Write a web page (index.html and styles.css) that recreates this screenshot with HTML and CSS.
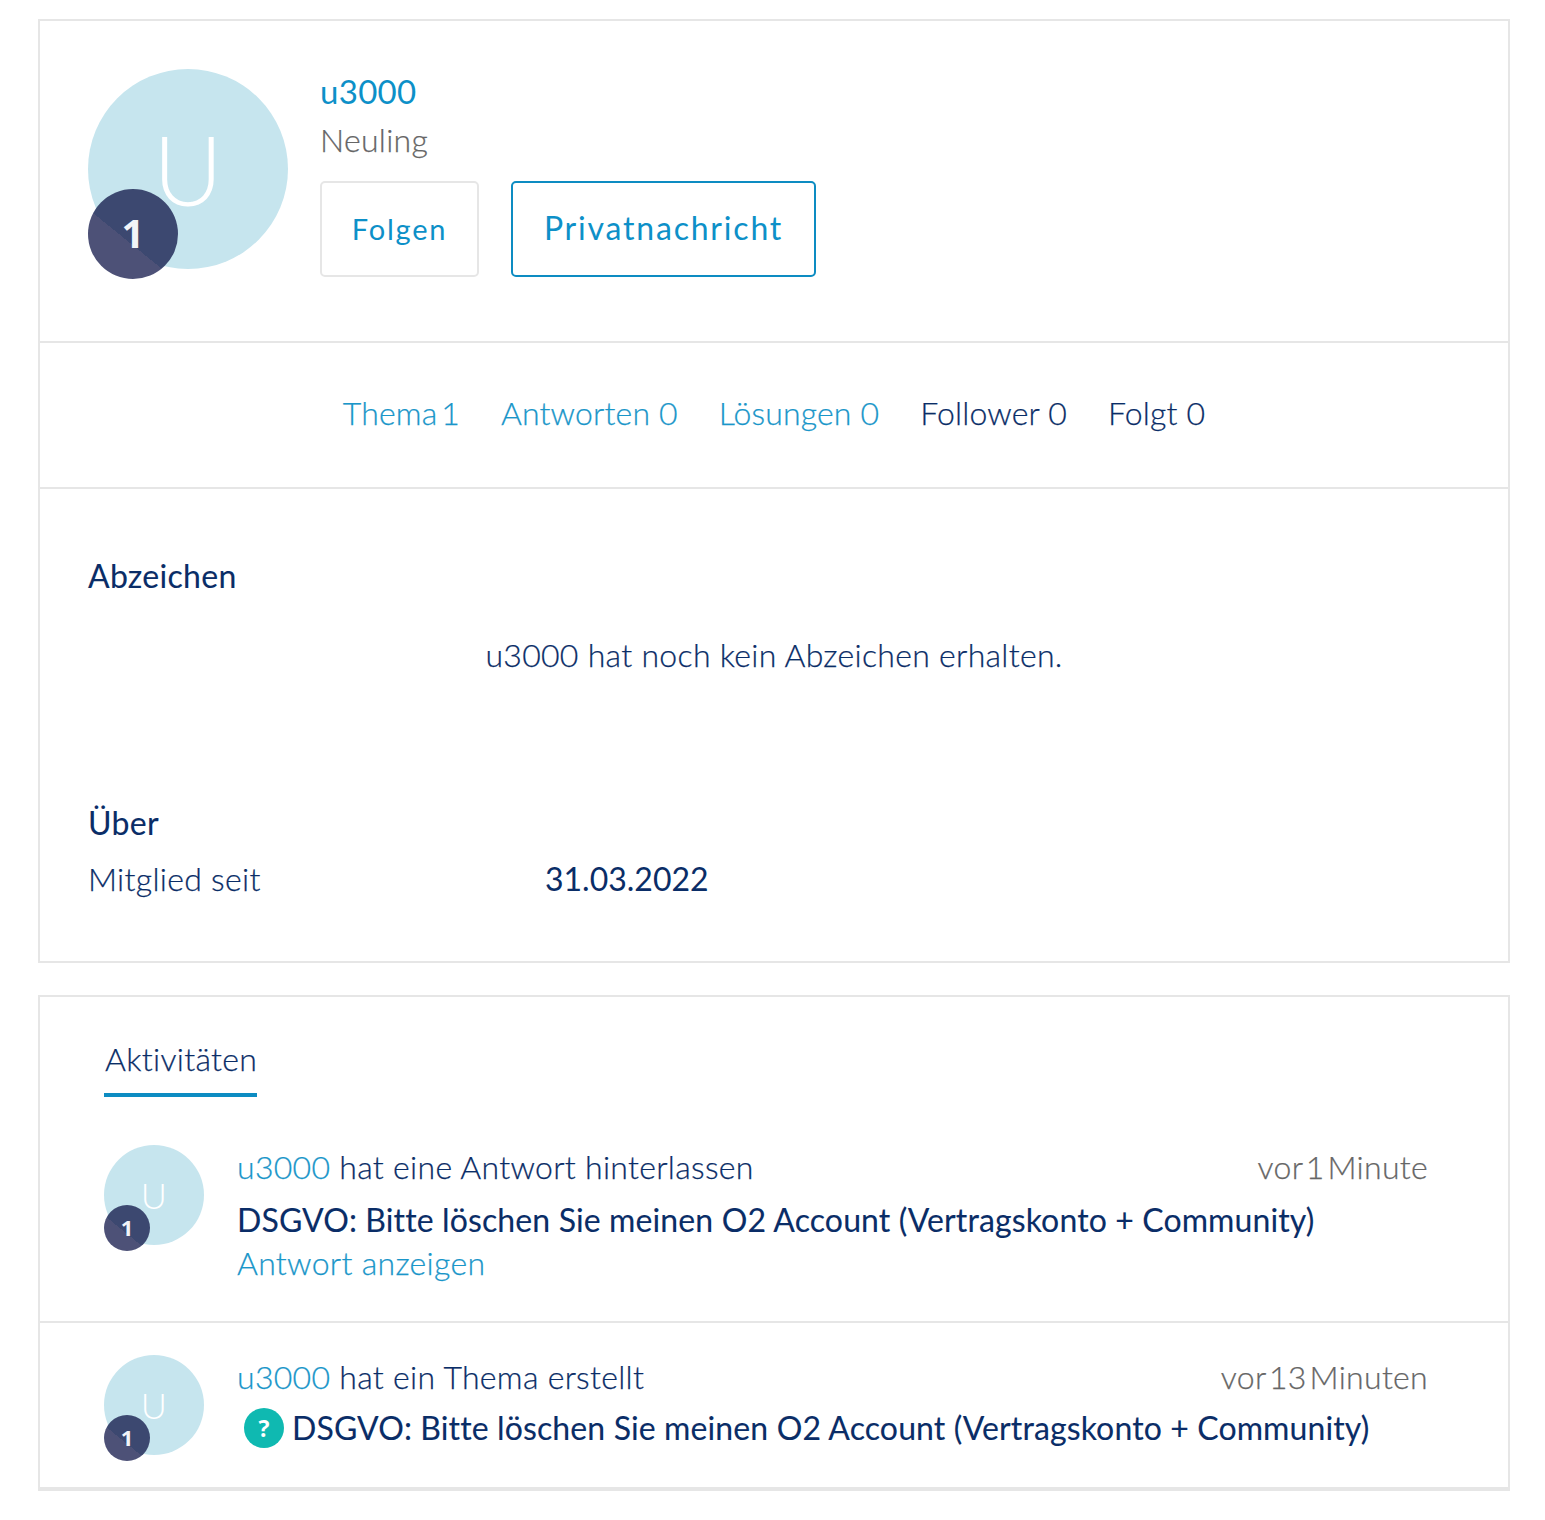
FILE: index.html
```html
<!DOCTYPE html>
<html lang="de">
<head>
  <meta charset="UTF-8" />
  <meta name="viewport" content="width=device-width, initial-scale=1" />
  <title>u3000</title>
  <link rel="stylesheet" href="styles.css">
</head>
<body>

  <section class="card">
    <div class="profile">
      <div class="avatar avatar-big">
        <span class="avatar-letter">U</span>
        <span class="rank">1</span>
      </div>
      <div class="profile-info">
        <a class="name">u3000</a>
        <div class="role">Neuling</div>
        <div class="actions">
          <button class="btn btn-follow">Folgen</button>
          <button class="btn btn-message">Privatnachricht</button>
        </div>
      </div>
    </div>

    <ul class="stats">
      <li class="stat-link stat-topic">Thema 1</li>
      <li class="stat-link">Antworten 0</li>
      <li class="stat-link">Lösungen 0</li>
      <li>Follower 0</li>
      <li>Folgt 0</li>
    </ul>

    <div class="details">
      <h2 class="title">Abzeichen</h2>
      <p class="empty">u3000 hat noch kein Abzeichen erhalten.</p>
      <h2 class="title title-about">Über</h2>
      <div class="member">
        <span class="member-label">Mitglied seit</span>
        <span class="member-date">31.03.2022</span>
      </div>
    </div>
  </section>

  <section class="card card-activity">
    <div class="tabs">
      <span class="tab">Aktivitäten</span>
    </div>

    <div class="activity">
      <div class="avatar">
        <span class="avatar-letter">U</span>
        <span class="rank">1</span>
      </div>
      <div class="activity-body">
        <div class="activity-head">
          <span><a class="link">u3000</a> hat eine Antwort hinterlassen</span>
          <span class="time">vor 1 Minute</span>
        </div>
        <div class="topic">DSGVO: Bitte löschen Sie meinen O2 Account (Vertragskonto + Community)</div>
        <a class="link show-reply">Antwort anzeigen</a>
      </div>
    </div>

    <div class="activity activity-last">
      <div class="avatar">
        <span class="avatar-letter">U</span>
        <span class="rank">1</span>
      </div>
      <div class="activity-body">
        <div class="activity-head">
          <span><a class="link">u3000</a> hat ein Thema erstellt</span>
          <span class="time">vor 13 Minuten</span>
        </div>
        <div class="topic topic-question">
          <span class="question">?</span>
          DSGVO: Bitte löschen Sie meinen O2 Account (Vertragskonto + Community)
        </div>
      </div>
    </div>
  </section>

</body>
</html>
```

FILE: styles.css
```css
* {
  box-sizing: border-box;
}

body {
  margin: 0;
  padding: 19px 35px 0 38px;
  background: #fff;
  color: #0a2d67;
  font-family: "Lato", "Noto Sans", sans-serif;
  font-size: 32px;
  font-weight: 300;
  letter-spacing: 0.3px;
  line-height: 40px;
  -webkit-text-stroke: 0.25px;
}

.card {
  border: 2px solid #e6e6e6;
  background: #fff;
}

.card-activity {
  margin-top: 32px;
  border-bottom-width: 4px;
}

/* Profil */
.profile {
  display: flex;
  height: 322px;
  padding: 48px 48px 0;
  border-bottom: 2px solid #e6e6e6;
}

.avatar {
  position: relative;
  flex: none;
  display: flex;
  justify-content: center;
  width: 100px;
  height: 100px;
  border-radius: 50%;
  background: #c6e5ee;
}

.avatar-big {
  width: 200px;
  height: 200px;
}

.avatar-letter {
  margin-top: 27px;
  color: #fff;
  font-size: 36px;
  font-weight: 300;
  line-height: 46px;
  -webkit-text-stroke: 0;
}

.avatar-big .avatar-letter {
  margin-top: 50px;
  font-size: 96px;
  line-height: 100px;
}

.rank {
  position: absolute;
  left: 0;
  bottom: -6px;
  width: 46px;
  height: 46px;
  border-radius: 50%;
  background: linear-gradient(39deg, #4d5177 0 43%, #3c4870 43%);
  color: #f2f4f8;
  font-family: "Open Sans", sans-serif;
  font-size: 22px;
  font-weight: 700;
  letter-spacing: 0;
  line-height: 44px;
  text-align: center;
  -webkit-text-stroke: 0;
}

.avatar-big .rank {
  bottom: -10px;
  width: 90px;
  height: 90px;
  font-size: 40px;
  line-height: 88px;
}

.profile-info {
  margin-left: 32px;
  padding-top: 2px;
}

.name {
  display: block;
  color: #0d90c8;
  font-size: 33px;
  font-weight: 400;
  -webkit-text-stroke: 0;
}

.role {
  margin-top: 9px;
  color: #666;
}

.actions {
  display: flex;
  gap: 32px;
  margin-top: 21px;
}

.btn {
  height: 96px;
  padding-bottom: 5px;
  background: #fff;
  color: #0d90c8;
  font-family: inherit;
  font-weight: 400;
  border-radius: 5px;
  letter-spacing: 1.8px;
  -webkit-text-stroke: 0;
}

.btn-follow {
  width: 159px;
  padding-bottom: 3px;
  border: 2px solid #e6e6e6;
  font-size: 29px;
}

.btn-message {
  width: 305px;
  border: 2px solid #0d8cc2;
  font-size: 32px;
}

/* Zahlen */
.stats {
  display: flex;
  justify-content: center;
  gap: 41px;
  height: 146px;
  margin: 0;
  padding: 50px 0 0;
  border-bottom: 2px solid #e6e6e6;
  letter-spacing: 0.15px;
  list-style: none;
}

.stat-link {
  color: #1a96c9;
}

.stat-topic {
  word-spacing: -5px;
}

/* Details */
.details {
  height: 472px;
  padding: 67px 48px 0;
}

.title {
  margin: 0;
  font-size: 32px;
  font-weight: 400;
  line-height: 40px;
  -webkit-text-stroke: 0.1px;
}

.empty {
  margin: 39px 0 0;
  text-align: center;
}

.title-about {
  margin-top: 128px;
}

.member {
  display: flex;
  margin-top: 16px;
}

.member-label {
  width: 457px;
}

.member-date {
  font-weight: 400;
  letter-spacing: 0;
  -webkit-text-stroke: 0;
}

/* Aktivitäten */
.tabs {
  display: flex;
  padding: 42px 0 0 64px;
}

.tab {
  padding: 0 0 14px 1px;
  border-bottom: 4px solid #0d8cc2;
}

.activity {
  display: flex;
  height: 226px;
  padding: 48px 80px 0 64px;
  border-bottom: 2px solid #e6e6e6;
}

.activity-last {
  height: auto;
  padding-top: 32px;
  padding-bottom: 32px;
  border-bottom: 0;
}

.activity-body {
  flex: 1;
  margin-left: 33px;
  padding-top: 2px;
}

.activity-head {
  display: flex;
  justify-content: space-between;
  margin-bottom: 13px;
}

.link {
  color: #1a96c9;
}

.time {
  color: #666;
  word-spacing: -6px;
}

.topic {
  font-weight: 400;
  letter-spacing: 0.12px;
  -webkit-text-stroke: 0.1px;
}

.topic-question {
  display: flex;
  align-items: center;
  gap: 8px;
  margin-top: -2px;
  padding-left: 7px;
  white-space: nowrap;
}

.question {
  flex: none;
  width: 40px;
  height: 40px;
  border-radius: 50%;
  background: #0fb9b1;
  color: #fff;
  font-family: "Open Sans", sans-serif;
  font-size: 23px;
  font-weight: 700;
  letter-spacing: 0;
  line-height: 40px;
  text-align: center;
  -webkit-text-stroke: 0;
}

.show-reply {
  display: block;
  margin-top: 3px;
}
```
